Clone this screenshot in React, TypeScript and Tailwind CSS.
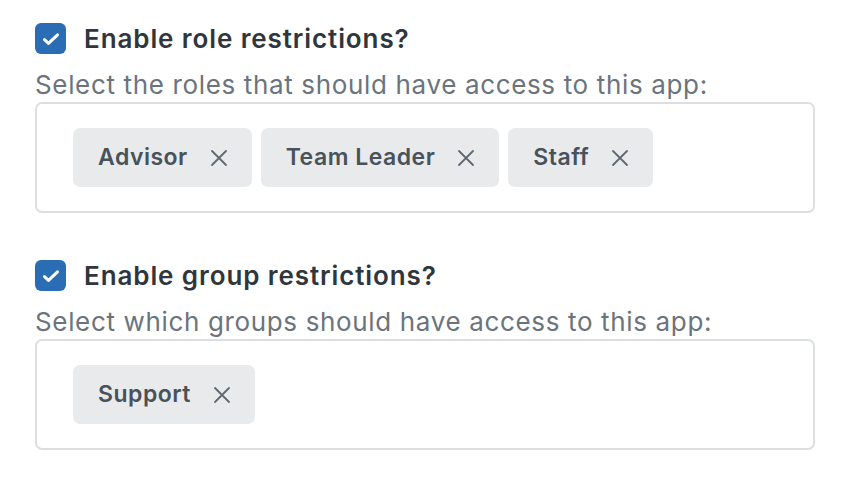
import React from 'react';

const Check = () => (
  <span className="flex h-[31px] w-[31px] shrink-0 items-center justify-center rounded-[6px] bg-[#2a6db5]">
    <svg width="18" height="18" viewBox="0 0 18 18" fill="none">
      <path d="M2.5 9.6l4 3.8 9-8.6" stroke="white" strokeWidth="3" strokeLinecap="round" strokeLinejoin="round" />
    </svg>
  </span>
);

const Chip = ({ label }: { label: string }) => (
  <div className="flex h-[59px] items-center rounded-[7px] bg-[#e9eaec] pl-[25px] pr-[24px]">
    <span className="text-[23px] font-semibold tracking-[0.5px] text-[#48525b]">{label}</span>
    <svg className="ml-[22px]" width="18" height="18" viewBox="0 0 18 18" fill="none">
      <path d="M2 2l14 14M16 2L2 16" stroke="#5f6871" strokeWidth="1.8" strokeLinecap="round" />
    </svg>
  </div>
);

const Section = ({ title, hint, chips }: { title: string; hint: string; chips: string[] }) => (
  <div>
    <div className="flex items-center gap-[18px]">
      <Check />
      <span className="text-[26px] font-semibold leading-[31px] tracking-[0.9px] text-[#2f363d]">{title}</span>
    </div>
    <p className="mt-[16px] text-[26px] leading-[30px] tracking-[0.65px] text-[#6b747c]">{hint}</p>
    <div className="mt-[2px] flex gap-[9px] rounded-[7px] border-2 border-[#dcdfe2] px-[36px] py-[24px]">
      {chips.map((c) => (
        <Chip key={c} label={c} />
      ))}
    </div>
  </div>
);

export default function App() {
  return (
    <div className="h-[482px] w-[852px] bg-white pl-[35px] pr-[37px] pt-[23px] font-['Inter',sans-serif]">
      <div className="flex flex-col gap-[47px]">
        <Section
          title="Enable role restrictions?"
          hint="Select the roles that should have access to this app:"
          chips={['Advisor', 'Team Leader', 'Staff']}
        />
        <Section
          title="Enable group restrictions?"
          hint="Select which groups should have access to this app:"
          chips={['Support']}
        />
      </div>
    </div>
  );
}
